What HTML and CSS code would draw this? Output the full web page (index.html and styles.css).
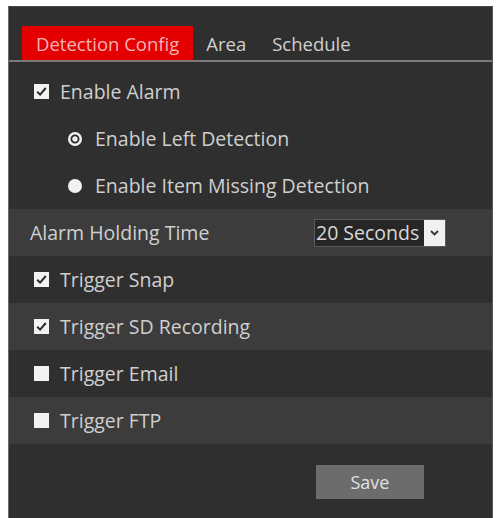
FILE: index.html
```html
<!DOCTYPE html>
<html>
<head>
<meta charset="utf-8">
<link rel="stylesheet" href="styles.css">
</head>
<body>
<div class="panel">
  <div class="tabs">
    <div class="tab active">Detection Config</div>
    <div class="tab">Area</div>
    <div class="tab">Schedule</div>
  </div>
  <div class="rows">
    <div class="row">
      <svg class="cb" width="15" height="15" viewBox="0 0 15 15"><rect width="15" height="15" fill="#f2f2f2"/><path d="M3.2 7.7 L6.1 10.6 L11.8 4" stroke="#2a2a2a" stroke-width="2" fill="none"/></svg>
      <span>Enable Alarm</span>
    </div>
    <div class="row indent">
      <svg class="rd" width="14" height="14" viewBox="0 0 14 14"><circle cx="7" cy="7" r="7" fill="#f2f2f2"/><circle cx="7" cy="7" r="3.6" fill="none" stroke="#2a2a2a" stroke-width="1.8"/></svg>
      <span>Enable Left Detection</span>
    </div>
    <div class="row indent">
      <svg class="rd" width="14" height="14" viewBox="0 0 14 14"><circle cx="7" cy="7" r="7" fill="#f2f2f2"/></svg>
      <span>Enable Item Missing Detection</span>
    </div>
    <div class="row alt holding">
      <span class="label">Alarm Holding Time</span>
      <div class="select">
        <span class="sel-text">20 Seconds</span>
        <span class="sel-btn"><svg width="9" height="6" viewBox="0 0 9 6"><path d="M1 1 L4.5 4.5 L8 1" stroke="#333" stroke-width="1.8" fill="none"/></svg></span>
      </div>
    </div>
    <div class="row">
      <svg class="cb" width="15" height="15" viewBox="0 0 15 15"><rect width="15" height="15" fill="#f2f2f2"/><path d="M3.2 7.7 L6.1 10.6 L11.8 4" stroke="#2a2a2a" stroke-width="2" fill="none"/></svg>
      <span>Trigger Snap</span>
    </div>
    <div class="row alt">
      <svg class="cb" width="15" height="15" viewBox="0 0 15 15"><rect width="15" height="15" fill="#f2f2f2"/><path d="M3.2 7.7 L6.1 10.6 L11.8 4" stroke="#2a2a2a" stroke-width="2" fill="none"/></svg>
      <span>Trigger SD Recording</span>
    </div>
    <div class="row">
      <svg class="cb" width="15" height="15" viewBox="0 0 15 15"><rect width="15" height="15" fill="#f2f2f2"/></svg>
      <span>Trigger Email</span>
    </div>
    <div class="row alt">
      <svg class="cb" width="15" height="15" viewBox="0 0 15 15"><rect width="15" height="15" fill="#f2f2f2"/></svg>
      <span>Trigger FTP</span>
    </div>
  </div>
  <div class="actions">
    <button class="save">Save</button>
  </div>
</div>
</body>
</html>
```

FILE: styles.css
```css
html, body {
  margin: 0;
  padding: 0;
  background: #ffffff;
}
body {
  font-family: "Open Sans", "Noto Sans", "Liberation Sans", sans-serif;
  font-size: 19.5px;
  color: #cfcfcf;
}
.panel {
  margin: 6px 0 0 8px;
  width: 485px;
  height: 512px;
  box-sizing: border-box;
  background: #2f2f2f;
  border-left: 1px solid #6a6a6a;
  border-top: 1px solid #4a4a4a;
  border-right: 1px solid #555;
}
.tabs {
  display: flex;
  align-items: stretch;
  padding: 19px 0 0 13px;
  border-bottom: 2px solid #7a7a7a;
  height: 34px;
}
.tab {
  display: flex;
  align-items: center;
  padding: 0 13px;
  font-size: 18.5px;
  color: #cfcfcf;
}
.tab.active {
  background: #e40000;
  color: #f3b4b4;
  padding: 0 14px;
}
.rows {
  margin-top: 6px;
}
.row {
  display: flex;
  align-items: center;
  height: 47px;
  padding-left: 25px;
}
.row.indent {
  padding-left: 59px;
}
.row.alt {
  background: #3c3c3c;
}
.cb {
  flex: none;
  margin-right: 11px;
}
.rd {
  flex: none;
  margin-right: 13px;
}
.holding {
  padding-left: 21px;
  justify-content: space-between;
  padding-right: 46px;
}
.select {
  display: flex;
  align-items: center;
  height: 28px;
  width: 132px;
  box-sizing: border-box;
  border: 1px solid #5a5a5a;
  background: #262626;
}
.sel-text {
  flex: 1;
  padding-left: 1px;
  color: #d8d8d8;
  white-space: nowrap;
  overflow: hidden;
}
.sel-btn {
  flex: none;
  width: 21px;
  height: 26px;
  background: #f0f0f0;
  display: flex;
  align-items: center;
  justify-content: center;
}
.actions {
  display: flex;
  padding: 21px 0 0 307px;
}
.save {
  width: 108px;
  height: 34px;
  border: none;
  background: #6c6c6c;
  color: #e0e0e0;
  font-family: "Open Sans", "Noto Sans", "Liberation Sans", sans-serif;
  font-size: 18px;
  padding: 0;
}
```
